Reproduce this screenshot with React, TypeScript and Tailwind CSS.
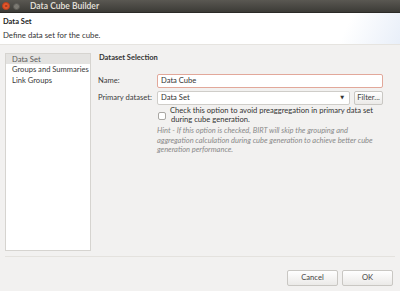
import React from "react";

export default function App() {
  const font = { fontFamily: 'Lato, "Open Sans", "DejaVu Sans", sans-serif' };
  return (
    <div className="w-[400px] h-[291px] flex flex-col bg-[#f2f1f0] overflow-hidden text-[7.6px] text-[#3c3c3c] whitespace-nowrap" style={font}>
      {/* Title bar */}
      <div className="h-[13px] flex items-center bg-gradient-to-b from-[#5a5852] to-[#3c3b37] border-b border-[#2b2a27]">
        <div className="w-[8px] h-[8px] rounded-full bg-[#e6562c] ml-[2px] border border-[#b8401c] flex items-center justify-center text-[6px] leading-none text-[#5a2310]">×</div>
        <div className="w-[7px] h-[7px] rounded-full bg-[#7b7972] ml-[3px] border border-[#5b5a55]" />
        <div className="ml-[10px] text-[8.5px] font-bold text-[#dfdbd2] leading-none">Data Cube Builder</div>
      </div>
      {/* Header */}
      <div className="h-[32px] bg-white flex flex-col px-[3px] pt-[3px] relative overflow-hidden border-b border-[#e6e4e0]">
        <div className="font-bold text-[7.5px] text-[#222] leading-[12px]">Data Set</div>
        <div className="text-[7.8px] text-[#333] leading-[12px] mt-[1px]">Define data set for the cube.</div>
        <div className="absolute right-[-30px] top-[-20px] w-[80px] h-[70px] rotate-[25deg] bg-gradient-to-l from-[#dfe8f6] to-transparent" />
      </div>
      {/* Body */}
      <div className="flex flex-1 px-[5px] pt-[8px] gap-[6px]">
        <div className="w-[86px] h-[198px] bg-white border border-[#d6d4d0] flex flex-col">
          <div className="bg-[#e4e3e1] h-[10px] leading-[10px] pl-[6px] text-[#5a5a5a]">Data Set</div>
          <div className="h-[11px] leading-[11px] pl-[6px] text-[#3a3a3a]">Groups and Summaries</div>
          <div className="h-[11px] leading-[11px] pl-[6px] text-[#3a3a3a]">Link Groups</div>
        </div>
        <div className="flex-1 flex flex-col">
          <div className="font-bold text-[7.5px] text-[#333] leading-[10px] pl-[2px]">Dataset Selection</div>
          <div className="flex items-center mt-[11px] h-[14px]">
            <div className="w-[60px] pl-[1px]">Name:</div>
            <div className="w-[226px] h-[14px] bg-white border border-[#e2a89a] rounded-[2px] flex items-center pl-[3px] text-[#333]">Data Cube</div>
          </div>
          <div className="flex items-center mt-[3px] h-[14px]">
            <div className="w-[60px] pl-[1px]">Primary dataset:</div>
            <div className="w-[193px] h-[14px] bg-white border border-[#cfcdc9] rounded-[2px] flex items-center justify-between pl-[3px] pr-[5px] text-[#333]">
              <span>Data Set</span>
              <span className="text-[5px]">▼</span>
            </div>
            <div className="ml-[4px] w-[29px] h-[14px] bg-gradient-to-b from-white to-[#ebeae8] border border-[#c9c7c3] rounded-[2px] flex items-center justify-center text-[#444]">Filter...</div>
          </div>
          <div className="flex mt-[1px] pl-[61px]">
            <div className="w-[8px] h-[8px] mt-[6px] bg-white border border-[#a9a7a3] rounded-[2px]" />
            <div className="ml-[4px] leading-[9px] text-[#333]">
              Check this option to avoid preaggregation in primary data set
              <br />
              <span className="pl-[1px]">during cube generation.</span>
            </div>
          </div>
          <div className="pl-[60px] mt-[2px] italic text-[7.5px] leading-[9.5px] text-[#8a8a8a]">
            Hint - If this option is checked, BIRT will skip the grouping and
            <br />
            aggregation calculation during cube generation to achieve better cube
            <br />
            generation performance.
          </div>
        </div>
      </div>
      <div className="mx-[5px] border-t border-[#e4e2de]" />
      <div className="flex justify-end gap-[4px] px-[7px] pt-[13px] pb-[5px]">
        <div className="w-[51px] h-[16px] bg-gradient-to-b from-white to-[#ebeae8] border border-[#c9c7c3] rounded-[2px] flex items-center justify-center text-[#444]">Cancel</div>
        <div className="w-[51px] h-[16px] bg-gradient-to-b from-white to-[#ebeae8] border border-[#c9c7c3] rounded-[2px] flex items-center justify-center text-[#444]">OK</div>
      </div>
    </div>
  );
}
